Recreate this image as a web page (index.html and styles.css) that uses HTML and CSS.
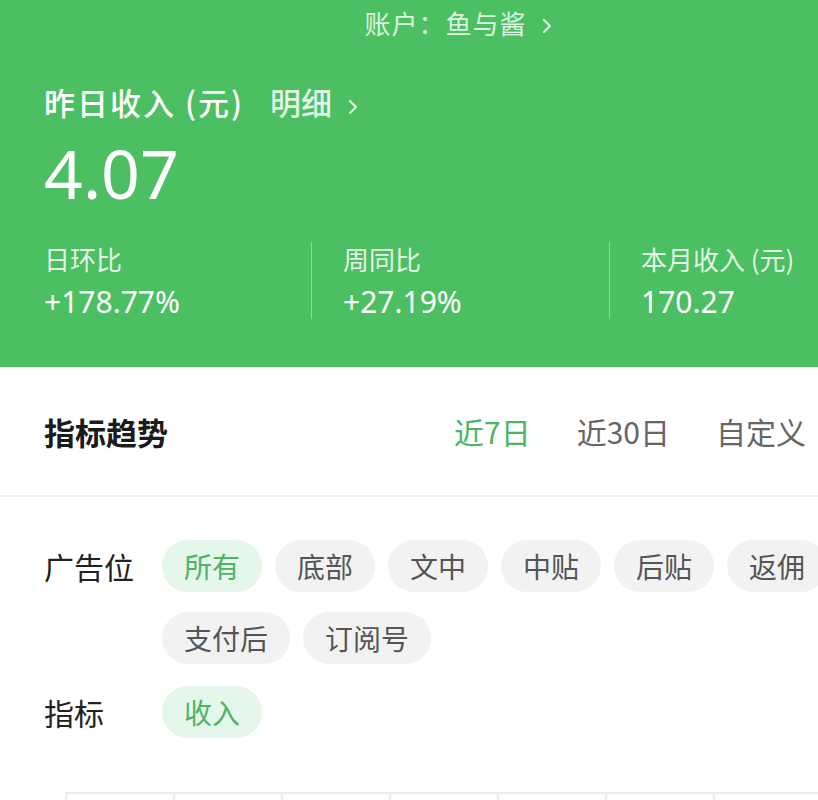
FILE: index.html
```html
<!DOCTYPE html>
<html lang="zh-CN">

<head>
    <meta charset="UTF-8">
    <title>收入数据</title>
    <link rel="stylesheet" href="styles.css">
</head>

<body>
    <div class="header">
        <div class="account">
            账户：鱼与酱
            <svg class="chev" width="12" height="18" viewBox="0 0 12 18"><path d="M3 3l6 6-6 6" fill="none" stroke="currentColor" stroke-width="2.2" stroke-linecap="round" stroke-linejoin="round"/></svg>
        </div>
        <div class="summary">
            <div class="title">
                <span class="title-text">昨日收入 (元)</span>
                <a class="detail" href="#">明细
                    <svg class="chev" width="12" height="18" viewBox="0 0 12 18"><path d="M3 3l6 6-6 6" fill="none" stroke="currentColor" stroke-width="2.2" stroke-linecap="round" stroke-linejoin="round"/></svg>
                </a>
            </div>
            <div class="amount">4.07</div>
            <div class="stats">
                <div class="stat">
                    <div class="stat-label">日环比</div>
                    <div class="stat-value">+178.77%</div>
                </div>
                <div class="stat">
                    <div class="stat-label">周同比</div>
                    <div class="stat-value">+27.19%</div>
                </div>
                <div class="stat">
                    <div class="stat-label">本月收入 (元)</div>
                    <div class="stat-value">170.27</div>
                </div>
            </div>
        </div>
    </div>

    <div class="trend-head">
        <h2>指标趋势</h2>
        <div class="tabs">
            <span class="tab active">近7日</span>
            <span class="tab">近30日</span>
            <span class="tab">自定义</span>
        </div>
    </div>

    <div class="filters">
        <div class="filter-row">
            <div class="filter-label">广告位</div>
            <div class="chips">
                <span class="chip active">所有</span>
                <span class="chip">底部</span>
                <span class="chip">文中</span>
                <span class="chip">中贴</span>
                <span class="chip">后贴</span>
                <span class="chip">返佣</span>
                <span class="chip">支付后</span>
                <span class="chip">订阅号</span>
            </div>
        </div>
        <div class="filter-row">
            <div class="filter-label">指标</div>
            <div class="chips">
                <span class="chip active">收入</span>
            </div>
        </div>
    </div>

    <div class="chart">
        <div class="grid">
            <span></span><span></span><span></span><span></span><span></span><span></span><span></span><span></span>
        </div>
    </div>
</body>

</html>
```

FILE: styles.css
```css
body {
    margin: 0;
    padding: 0;
    background: #fff;
    font-family: 'Noto Sans CJK SC', 'Noto Sans', sans-serif;
    overflow: hidden;
}

.header {
    background: #4cbf63;
    color: #fff;
    height: 367px;
    box-sizing: border-box;
}

.account {
    height: 46px;
    line-height: 46px;
    padding-left: 100px;
    text-align: center;
    font-size: 26px;
    color: rgba(255, 255, 255, 0.82);
    letter-spacing: 1px;
}

.chev {
    vertical-align: -1px;
    margin-left: 8px;
}

.summary {
    padding: 0 44px;
}

.title {
    margin-top: 35px;
    font-size: 31px;
    line-height: 42px;
    font-weight: 500;
    display: flex;
    align-items: center;
}

.title-text {
    letter-spacing: 2px;
}

.detail {
    color: rgba(255, 255, 255, 0.85);
    text-decoration: none;
    margin-left: 26px;
    font-weight: 500;
}

.amount {
    margin-top: 14px;
    font-family: 'Noto Sans', sans-serif;
    font-size: 68px;
    line-height: 72px;
}

.stats {
    margin-top: 33px;
    display: grid;
    grid-template-columns: 267px 298px 1fr;
    white-space: nowrap;
}

.stat + .stat {
    border-left: 1.5px solid rgba(255, 255, 255, 0.38);
    padding-left: 31px;
}

.stat-label {
    font-size: 26px;
    line-height: 34px;
    color: rgba(255, 255, 255, 0.85);
}

.stat-value {
    margin-top: 9px;
    font-size: 30px;
    line-height: 34px;
    font-family: 'Noto Sans', sans-serif;
}

.trend-head {
    height: 128px;
    display: flex;
    align-items: center;
    justify-content: space-between;
    padding: 0 12px 0 44px;
    border-bottom: 2px solid #efefef;
}

.trend-head h2 {
    margin: 0;
    font-size: 31px;
    font-weight: 600;
    color: #1b1b1b;
}

.tabs {
    display: flex;
    gap: 46px;
}

.tab {
    font-size: 30px;
    color: #666;
}

.tab.active {
    color: #4cb564;
}

.filters {
    padding: 43px 0 0 44px;
}

.filter-row {
    display: flex;
    margin-bottom: 22px;
}

.filter-label {
    width: 118px;
    flex-shrink: 0;
    font-size: 30px;
    line-height: 52px;
    color: #222;
}

.chips {
    display: flex;
    flex-wrap: wrap;
    gap: 20px 13px;
    margin-right: -60px;
}

.chip {
    height: 52px;
    line-height: 52px;
    padding: 0 22px;
    border-radius: 26px;
    background: #f2f2f2;
    color: #555;
    font-size: 28px;
}

.chip.active {
    background: #e5f6ea;
    color: #4cb564;
}

.chart {
    padding: 32px 0 0 65px;
}

.grid {
    display: flex;
    border-top: 2px solid #ececec;
    height: 20px;
}

.grid span {
    width: 108px;
    flex-shrink: 0;
    border-left: 2px solid #ececec;
    box-sizing: border-box;
}
```
